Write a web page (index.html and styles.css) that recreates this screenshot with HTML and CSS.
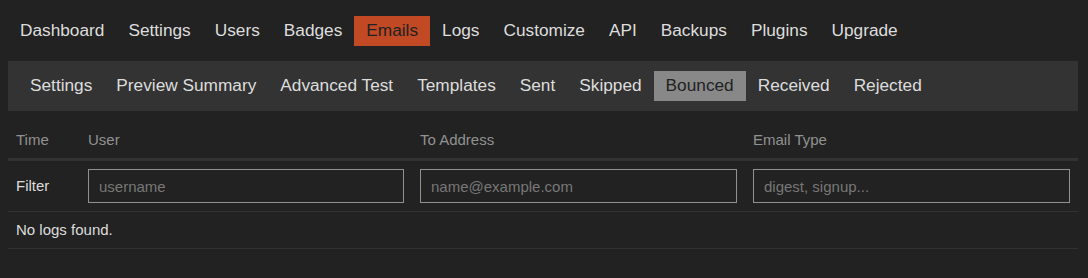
FILE: index.html
```html
<!DOCTYPE html>
<html lang="en">
<head>
  <meta charset="UTF-8">
  <title>Admin - Emails - Bounced</title>
  <link rel="stylesheet" href="styles.css">
</head>
<body>
  <div class="admin">
    <ul class="nav-pills">
      <li><a href="#">Dashboard</a></li>
      <li><a href="#">Settings</a></li>
      <li><a href="#">Users</a></li>
      <li><a href="#">Badges</a></li>
      <li><a href="#" class="active">Emails</a></li>
      <li><a href="#">Logs</a></li>
      <li><a href="#">Customize</a></li>
      <li><a href="#">API</a></li>
      <li><a href="#">Backups</a></li>
      <li><a href="#">Plugins</a></li>
      <li><a href="#">Upgrade</a></li>
    </ul>

    <ul class="sub-nav">
      <li><a href="#">Settings</a></li>
      <li><a href="#">Preview Summary</a></li>
      <li><a href="#">Advanced Test</a></li>
      <li><a href="#">Templates</a></li>
      <li><a href="#">Sent</a></li>
      <li><a href="#">Skipped</a></li>
      <li><a href="#" class="active">Bounced</a></li>
      <li><a href="#">Received</a></li>
      <li><a href="#">Rejected</a></li>
    </ul>

    <table class="email-list">
      <thead>
        <tr>
          <th class="col-time">Time</th>
          <th class="col-user">User</th>
          <th class="col-addr">To Address</th>
          <th class="col-type">Email Type</th>
        </tr>
      </thead>
      <tbody>
        <tr class="filters">
          <td>Filter</td>
          <td><input type="text" placeholder="username"></td>
          <td><input type="text" placeholder="name@example.com"></td>
          <td><input type="text" placeholder="digest, signup..."></td>
        </tr>
        <tr>
          <td colspan="4">No logs found.</td>
        </tr>
      </tbody>
    </table>
  </div>
</body>
</html>
```

FILE: styles.css
```css
body {
  font-family: "Liberation Sans", Arial, sans-serif;
  margin: 0;
  padding: 8px 10px 8px 8px;
  background-color: #222;
  color: #ddd;
}
ul {
  list-style: none;
  margin: 0;
  padding: 0;
}
a {
  color: #ddd;
  text-decoration: none;
}
.nav-pills {
  display: flex;
  padding-top: 8px;
  margin-bottom: 15px;
}
.nav-pills a,
.sub-nav a {
  display: block;
  font-size: 17.25px;
  line-height: 29px;
  height: 30px;
  padding: 0 12px;
}
.nav-pills a.active {
  background-color: #c14924;
  color: #222;
}
.sub-nav {
  display: flex;
  background-color: #333;
  padding: 10px 10px;
}
.sub-nav a.active {
  background-color: #888;
  color: #222;
}
.email-list {
  width: 100%;
  margin-top: 11px;
  border-collapse: collapse;
  table-layout: fixed;
  font-size: 15px;
}
.email-list th {
  text-align: left;
  font-weight: normal;
  color: #919191;
  padding: 8px;
  line-height: 20px;
  border-bottom: 3px solid #333;
}
.email-list td {
  padding: 8px;
  line-height: 20px;
  border-bottom: 1px solid #333;
}
.col-time { width: 56px; }
.col-user { width: 316px; }
.col-addr,
.col-type { width: 317px; }
.email-list input {
  display: block;
  box-sizing: border-box;
  width: 100%;
  height: 34px;
  margin: 0;
  padding: 4px 10px;
  font-family: inherit;
  font-size: 15px;
  color: #ddd;
  background-color: #222;
  border: 1px solid #919191;
  border-radius: 0;
}
.email-list input::placeholder {
  color: #777;
}
```
